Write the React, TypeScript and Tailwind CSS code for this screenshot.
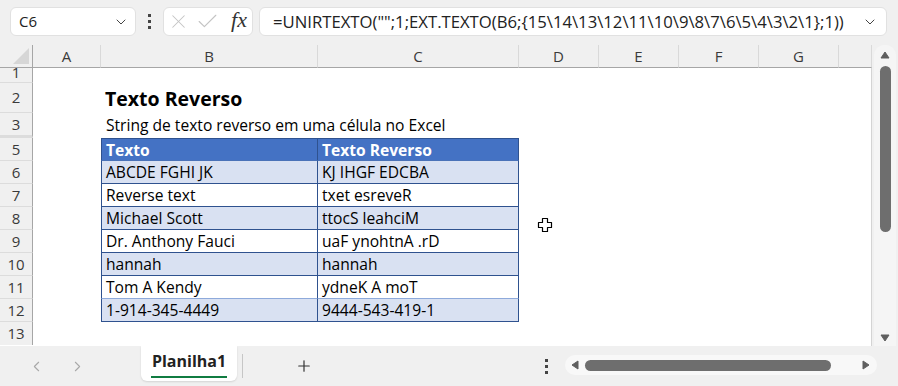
import React from 'react';
import { ChevronDown, ChevronLeft, ChevronRight, Plus, X, Check } from 'lucide-react';

const cols = ['A', 'B', 'C', 'D', 'E', 'F', 'G', ''];

const rows: { t: string; r: string }[] = [
  { t: 'ABCDE FGHI JK', r: 'KJ IHGF EDCBA' },
  { t: 'Reverse text', r: 'txet esreveR' },
  { t: 'Michael Scott', r: 'ttocS leahciM' },
  { t: 'Dr. Anthony Fauci', r: 'uaF ynohtnA .rD' },
  { t: 'hannah', r: 'hannah' },
  { t: 'Tom A Kendy', r: 'ydneK A moT' },
  { t: '1-914-345-4449', r: '9444-543-419-1' },
];

const VDots: React.FC = () => (
  <div className="flex flex-col gap-[3px] items-center">
    <span className="w-[3px] h-[3px] bg-[#444]" />
    <span className="w-[3px] h-[3px] bg-[#444]" />
    <span className="w-[3px] h-[3px] bg-[#444]" />
  </div>
);

const Tri: React.FC<{ dir: 'up' | 'down' | 'left' | 'right' }> = ({ dir }) => {
  const pts = {
    up: '1,8 5,2 9,8',
    down: '1,2 5,8 9,2',
    left: '8,1 2,5 8,9',
    right: '2,1 8,5 2,9',
  }[dir];
  return (
    <svg width="10" height="10" viewBox="0 0 10 10">
      <polygon points={pts} fill="#5f5f5f" stroke="#5f5f5f" strokeWidth="1" strokeLinejoin="round" />
    </svg>
  );
};

const RowHead: React.FC<{ n: string; extra?: string }> = ({ n, extra = '' }) => (
  <div className={`bg-[#f0f0f0] border-r border-r-[#a6a6a6] border-b border-b-[#dcdcdc] flex items-center justify-center text-[15px] text-[#3a3a3a] ${extra}`}>
    {n}
  </div>
);

export default function App() {
  return (
    <div className="w-[898px] h-[386px] bg-[#f0f0f0] flex flex-col overflow-hidden font-['Open_Sans',sans-serif] text-[#222]">
      {/* formula bar */}
      <div className="h-[45px] flex items-start pt-[7px] pl-[10px] shrink-0">
        <div className="w-[126px] h-[29px] bg-white border border-[#e1e1e1] rounded-[6px] flex items-center pl-[8px] pr-[6px]">
          <span className="text-[15px] flex-1">C6</span>
          <ChevronDown size={16} strokeWidth={1.5} className="text-[#444]" />
        </div>
        <div className="w-[27px] h-[29px] flex items-center justify-center">
          <VDots />
        </div>
        <div className="w-[90px] h-[29px] bg-white border border-[#e1e1e1] rounded-[6px] flex items-center pl-[3px] pr-[5px]">
          <X size={23} strokeWidth={1.1} className="text-[#c4c4c4]" />
          <Check size={25} strokeWidth={1.1} className="text-[#c4c4c4] ml-[5px]" />
          <span className="ml-auto font-['Liberation_Serif',serif] italic text-[22px] leading-none text-[#333] pb-[3px]">fx</span>
        </div>
        <div className="ml-[6px] w-[628px] h-[29px] bg-white border border-[#e1e1e1] rounded-[6px] flex items-center pl-[13px] pr-[8px]">
          <span className="flex-1 text-[16.7px] whitespace-nowrap">=UNIRTEXTO("";1;EXT.TEXTO(B6;{'{'}15\14\13\12\11\10\9\8\7\6\5\4\3\2\1{'}'};1))</span>
          <ChevronDown size={16} strokeWidth={1.5} className="text-[#444]" />
        </div>
      </div>

      {/* sheet */}
      <div className="flex h-[301px] shrink-0">
        <div className="relative w-[872px] bg-white border-r border-[#d4d4d4] grid grid-cols-[33px_68px_217px_201px_80px_80px_80px_80px_33px] grid-rows-[23px_15px_30px_25px_repeat(9,23px)]">
          {/* header row */}
          <div className="bg-[#f0f0f0] border-r border-r-[#a6a6a6] border-b border-b-[#a6a6a6] flex items-end justify-end pr-[3px] pb-[3px]">
            <svg width="16" height="16" viewBox="0 0 16 16"><polygon points="16,0 16,16 0,16" fill="#d6d6d6" /></svg>
          </div>
          {cols.map((c, i) => (
            <div key={i} className="bg-[#f0f0f0] border-r border-r-[#d9d9d9] border-b border-b-[#a6a6a6] flex items-center justify-center text-[15px] text-[#3a3a3a]">
              {c}
            </div>
          ))}

          {/* row 1 (partly scrolled) */}
          <div className="bg-[#f0f0f0] border-r border-r-[#a6a6a6] border-b border-b-[#dcdcdc] flex flex-col justify-end overflow-hidden">
            <div className="h-[23px] shrink-0 flex items-center justify-center text-[15px] text-[#3a3a3a] translate-y-[2px]">1</div>
          </div>
          <div className="col-span-8" />

          {/* row 2 */}
          <RowHead n="2" />
          <div />
          <div className="col-span-7 flex items-center pl-[4px] pt-[2px] text-[19.5px] font-bold text-black">Texto Reverso</div>

          {/* row 3 */}
          <RowHead n="3" extra="border-b-[3px] border-b-[#d2d2d2]" />
          <div />
          <div className="col-span-7 flex items-center pl-[5px] pt-[1px] text-[15.6px] text-black">String de texto reverso em uma célula no Excel</div>

          {/* row 5 header */}
          <RowHead n="5" />
          <div />
          <div className="bg-[#4472c4] border border-[#2f528f] border-b-[#4a72b8] flex items-center pl-[4px] pt-[2px] text-[15.6px] font-bold text-white">Texto</div>
          <div className="bg-[#4472c4] border-t border-r border-b border-[#2f528f] border-b-[#4a72b8] flex items-center pl-[4px] pt-[2px] text-[15.6px] font-bold text-white">Texto Reverso</div>
          <div className="col-span-5" />

          {rows.map((row, i) => {
            const band = i % 2 === 0 ? 'bg-[#d9e1f2]' : 'bg-white';
            const line = i === 5 ? 'border-b-[#8eaadb]' : 'border-b-[#2f528f]';
            return (
              <React.Fragment key={i}>
                <RowHead n={String(i + 6)} />
                <div />
                <div className={`${band} border-l border-r border-b border-[#2f528f] ${line} flex items-center pl-[4px] pt-[2px] text-[15.6px] text-black`}>{row.t}</div>
                <div className={`${band} border-r border-b border-[#2f528f] ${line} flex items-center pl-[4px] pt-[2px] text-[15.6px] text-black`}>{row.r}</div>
                <div className="col-span-5" />
              </React.Fragment>
            );
          })}

          {/* row 13 */}
          <RowHead n="13" extra="border-b-0" />
          <div className="col-span-8" />

          {/* mouse pointer */}
          <svg className="absolute left-[537px] top-[172px]" width="16" height="16" viewBox="0 0 16 16">
            <path d="M5.5 1.5h5v4h4v5h-4v4h-5v-4h-4v-5h4z" fill="white" stroke="black" strokeWidth="1.2" strokeLinejoin="round" />
          </svg>
        </div>

        {/* vertical scrollbar */}
        <div className="w-[26px] bg-[#f0f0f0] flex">
          <div className="mx-auto w-[22px] bg-[#f5f5f5] rounded-t-[10px] flex flex-col items-center pt-[5px] pb-[3px]">
            <Tri dir="up" />
            <div className="mt-[6px] w-[11px] h-[166px] rounded-full bg-[#6e6e6e]" />
            <div className="mt-auto">
              <Tri dir="down" />
            </div>
          </div>
        </div>
      </div>

      {/* sheet tabs */}
      <div className="flex-1 flex items-start">
        <div className="w-[141px] h-[40px] flex items-center pl-[28px] gap-[24px] text-[#a8a8a8]">
          <ChevronLeft size={17} strokeWidth={1.5} />
          <ChevronRight size={17} strokeWidth={1.5} />
        </div>
        <div className="w-[96px] h-[35px] bg-white rounded-b-[6px] shadow-[0_1px_2px_rgba(0,0,0,0.12)] flex flex-col items-center justify-center">
          <span className="text-[16px] font-bold text-[#222] leading-none mt-[4px]">Planilha1</span>
          <span className="mt-[7px] w-[76px] h-[2px] bg-[#107c41]" />
        </div>
        <div className="ml-[5px] mt-[8px] w-px h-[24px] bg-[#c6c6c6]" />
        <div className="ml-[52px] h-[40px] flex items-center text-[#333]">
          <Plus size={18} strokeWidth={1.6} />
        </div>
        <div className="ml-[232px] h-[40px] flex items-center">
          <VDots />
        </div>
        <div className="ml-[17px] mt-[9px] w-[312px] h-[20px] bg-[#f8f8f8] rounded-full flex items-center pl-[5px] pr-[6px]">
          <Tri dir="left" />
          <div className="ml-[5px] w-[246px] h-[11px] rounded-full bg-[#6e6e6e]" />
          <div className="ml-auto">
            <Tri dir="right" />
          </div>
        </div>
      </div>
    </div>
  );
}
